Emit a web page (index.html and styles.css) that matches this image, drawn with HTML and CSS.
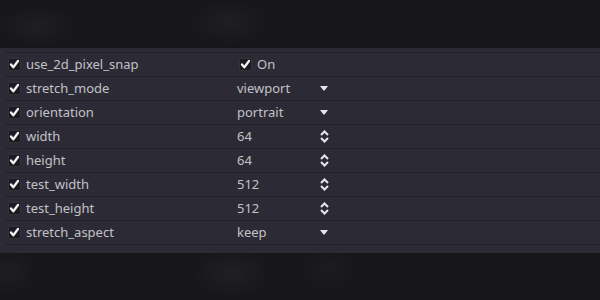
FILE: index.html
```html
<!DOCTYPE html>
<html lang="en">

<head>
  <meta charset="UTF-8" />
  <meta name="viewport" content="width=device-width, initial-scale=1.0" />
  <title>Project settings - display</title>
  <link rel="stylesheet" href="styles.css">
</head>

<body>
  <div class="backdrop backdrop-top"></div>

  <div class="panel">
    <div class="row">
      <div class="name"><span class="check"><svg viewBox="0 0 13 13"><path d="M3 6.5 L5.3 9.3 L10 3" /></svg></span>use_2d_pixel_snap</div>
      <div class="value"><span class="check"><svg viewBox="0 0 13 13"><path d="M3 6.5 L5.3 9.3 L10 3" /></svg></span><span class="on">On</span></div>
    </div>
    <div class="row">
      <div class="name"><span class="check"><svg viewBox="0 0 13 13"><path d="M3 6.5 L5.3 9.3 L10 3" /></svg></span>stretch_mode</div>
      <div class="value">viewport<svg class="drop" viewBox="0 0 8 5"><path d="M0 0 H8 L4.5 4.5 H3.5 Z" /></svg></div>
    </div>
    <div class="row">
      <div class="name"><span class="check"><svg viewBox="0 0 13 13"><path d="M3 6.5 L5.3 9.3 L10 3" /></svg></span>orientation</div>
      <div class="value">portrait<svg class="drop" viewBox="0 0 8 5"><path d="M0 0 H8 L4.5 4.5 H3.5 Z" /></svg></div>
    </div>
    <div class="row">
      <div class="name"><span class="check"><svg viewBox="0 0 13 13"><path d="M3 6.5 L5.3 9.3 L10 3" /></svg></span>width</div>
      <div class="value">64<svg class="spin" viewBox="0 0 9 13"><path d="M1 5 L4.5 1.5 L8 5 M1 8 L4.5 11.5 L8 8" /></svg></div>
    </div>
    <div class="row">
      <div class="name"><span class="check"><svg viewBox="0 0 13 13"><path d="M3 6.5 L5.3 9.3 L10 3" /></svg></span>height</div>
      <div class="value">64<svg class="spin" viewBox="0 0 9 13"><path d="M1 5 L4.5 1.5 L8 5 M1 8 L4.5 11.5 L8 8" /></svg></div>
    </div>
    <div class="row">
      <div class="name"><span class="check"><svg viewBox="0 0 13 13"><path d="M3 6.5 L5.3 9.3 L10 3" /></svg></span>test_width</div>
      <div class="value">512<svg class="spin" viewBox="0 0 9 13"><path d="M1 5 L4.5 1.5 L8 5 M1 8 L4.5 11.5 L8 8" /></svg></div>
    </div>
    <div class="row">
      <div class="name"><span class="check"><svg viewBox="0 0 13 13"><path d="M3 6.5 L5.3 9.3 L10 3" /></svg></span>test_height</div>
      <div class="value">512<svg class="spin" viewBox="0 0 9 13"><path d="M1 5 L4.5 1.5 L8 5 M1 8 L4.5 11.5 L8 8" /></svg></div>
    </div>
    <div class="row">
      <div class="name"><span class="check"><svg viewBox="0 0 13 13"><path d="M3 6.5 L5.3 9.3 L10 3" /></svg></span>stretch_aspect</div>
      <div class="value">keep<svg class="drop" viewBox="0 0 8 5"><path d="M0 0 H8 L4.5 4.5 H3.5 Z" /></svg></div>
    </div>
  </div>

  <div class="backdrop backdrop-bottom"></div>
</body>

</html>
```

FILE: styles.css
```css
* {
  box-sizing: border-box;
}

body {
  margin: 0;
  background-color: #17171a;
  font-family: "Noto Sans", "Open Sans", sans-serif;
  font-size: 13px;
  color: #c2c2c7;
}

.backdrop {
  background-color: #17171a;
}

.backdrop-top {
  height: 48px;
  background-image:
    radial-gradient(ellipse 40px 22px at 38px 26px, rgba(255, 255, 255, 0.035), transparent),
    radial-gradient(ellipse 40px 24px at 230px 22px, rgba(255, 255, 255, 0.035), transparent);
}

.backdrop-bottom {
  height: 48px;
  background-image:
    radial-gradient(ellipse 30px 24px at 8px 18px, rgba(255, 255, 255, 0.03), transparent),
    radial-gradient(ellipse 40px 26px at 232px 20px, rgba(255, 255, 255, 0.04), transparent),
    radial-gradient(ellipse 30px 22px at 330px 16px, rgba(255, 255, 255, 0.025), transparent);
}

.panel {
  padding: 4px 0 8px;
  background-color: #2c2b35;
}

.row {
  display: flex;
  align-items: center;
  height: 24px;
  margin-left: 5px;
  padding-bottom: 1px;
  border-top: 1px solid #222128;
}

.row:last-child {
  height: 25px;
  border-bottom: 1px solid #222128;
}

.name {
  display: flex;
  align-items: center;
  width: 232px;
  padding-left: 3px;
}

.value {
  display: flex;
  align-items: center;
  width: 92px;
}

.check {
  display: inline-flex;
  width: 13px;
  height: 13px;
  margin-right: 5px;
  border-radius: 2px;
  background-color: #1b1a20;
  box-shadow: inset 0 0 0 1px #34333c;
}

.check svg {
  width: 13px;
  height: 13px;
}

.check path {
  fill: none;
  stroke: #f4f4f4;
  stroke-width: 2.3;
  stroke-linecap: round;
  stroke-linejoin: round;
}

.value .check {
  margin-left: 2px;
}

.drop {
  width: 8px;
  height: 5px;
  margin-left: auto;
  margin-right: 1px;
  fill: #e6e6e6;
}

.spin {
  width: 9px;
  height: 13px;
  margin-left: auto;
  fill: none;
  stroke: #e6e6e6;
  stroke-width: 2;
}
```
